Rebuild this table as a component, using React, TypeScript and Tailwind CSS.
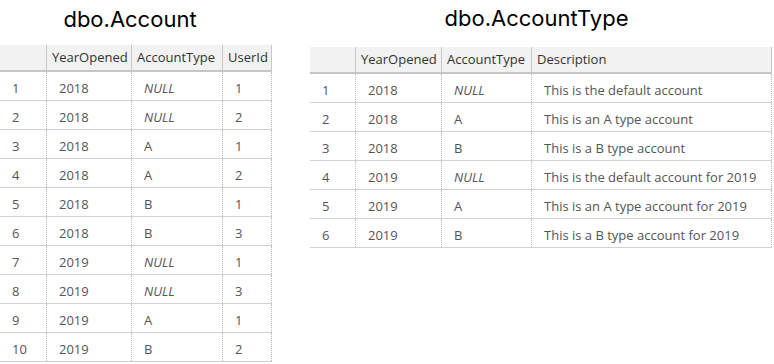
import React from "react";

type Row = string[];

const cellFont = { fontFamily: '"Open Sans", "Noto Sans", sans-serif' };

function Table({ widths, headers, rows, italicCol }: { widths: number[]; headers: string[]; rows: Row[]; italicCol: number }) {
  return (
    <div className="flex flex-col" style={cellFont}>
      <div className="flex h-[27px] bg-[#f2f2f2] border-b-2 border-[#c6c6c6]">
        {headers.map((h, i) => (
          <div
            key={i}
            className="flex items-center pl-[5px] pt-[1px] text-[13px] text-[#333] whitespace-nowrap border-r border-[#c8c8c8]"
            style={{ width: widths[i] }}
          >
            {h}
          </div>
        ))}
      </div>
      {rows.map((r, ri) => (
        <div key={ri} className="flex h-[29px] border-b border-[#d2d2d2]">
          {r.map((c, ci) => (
            <div
              key={ci}
              className={`flex items-center pl-[12px] pt-[6px] text-[13px] text-[#555] whitespace-nowrap border-r border-dotted border-[#bdbdbd] ${
                ci === italicCol && c === "NULL" ? "italic" : ""
              }`}
              style={{ width: widths[ci] }}
            >
              {c}
            </div>
          ))}
        </div>
      ))}
    </div>
  );
}

const accountRows: Row[] = [
  ["1", "2018", "NULL", "1"],
  ["2", "2018", "NULL", "2"],
  ["3", "2018", "A", "1"],
  ["4", "2018", "A", "2"],
  ["5", "2018", "B", "1"],
  ["6", "2018", "B", "3"],
  ["7", "2019", "NULL", "1"],
  ["8", "2019", "NULL", "3"],
  ["9", "2019", "A", "1"],
  ["10", "2019", "B", "2"],
];

const typeRows: Row[] = [
  ["1", "2018", "NULL", "This is the default account"],
  ["2", "2018", "A", "This is an A type account"],
  ["3", "2018", "B", "This is a B type account"],
  ["4", "2019", "NULL", "This is the default account for 2019"],
  ["5", "2019", "A", "This is an A type account for 2019"],
  ["6", "2019", "B", "This is a B type account for 2019"],
];

export default function App() {
  return (
    <div className="w-[774px] h-[364px] bg-white overflow-hidden flex">
      <div className="flex flex-col w-[272px]">
        <div
          className="h-[45px] flex items-center justify-center text-[22px] text-black pb-[6px] pr-[12px]"
          style={{ fontFamily: '"Inter", "Liberation Sans", sans-serif' }}
        >
          dbo.Account
        </div>
        <Table widths={[47, 85, 91, 49]} headers={["", "YearOpened", "AccountType", "UserId"]} rows={accountRows} italicCol={2} />
      </div>
      <div className="flex flex-col ml-[38px] w-[462px]">
        <div
          className="h-[47px] flex items-center justify-center text-[22px] text-black pb-[10px] pr-[9px]"
          style={{ fontFamily: '"Inter", "Liberation Sans", sans-serif' }}
        >
          dbo.AccountType
        </div>
        <Table
          widths={[46, 86, 90, 240]}
          headers={["", "YearOpened", "AccountType", "Description"]}
          rows={typeRows}
          italicCol={2}
        />
      </div>
    </div>
  );
}
